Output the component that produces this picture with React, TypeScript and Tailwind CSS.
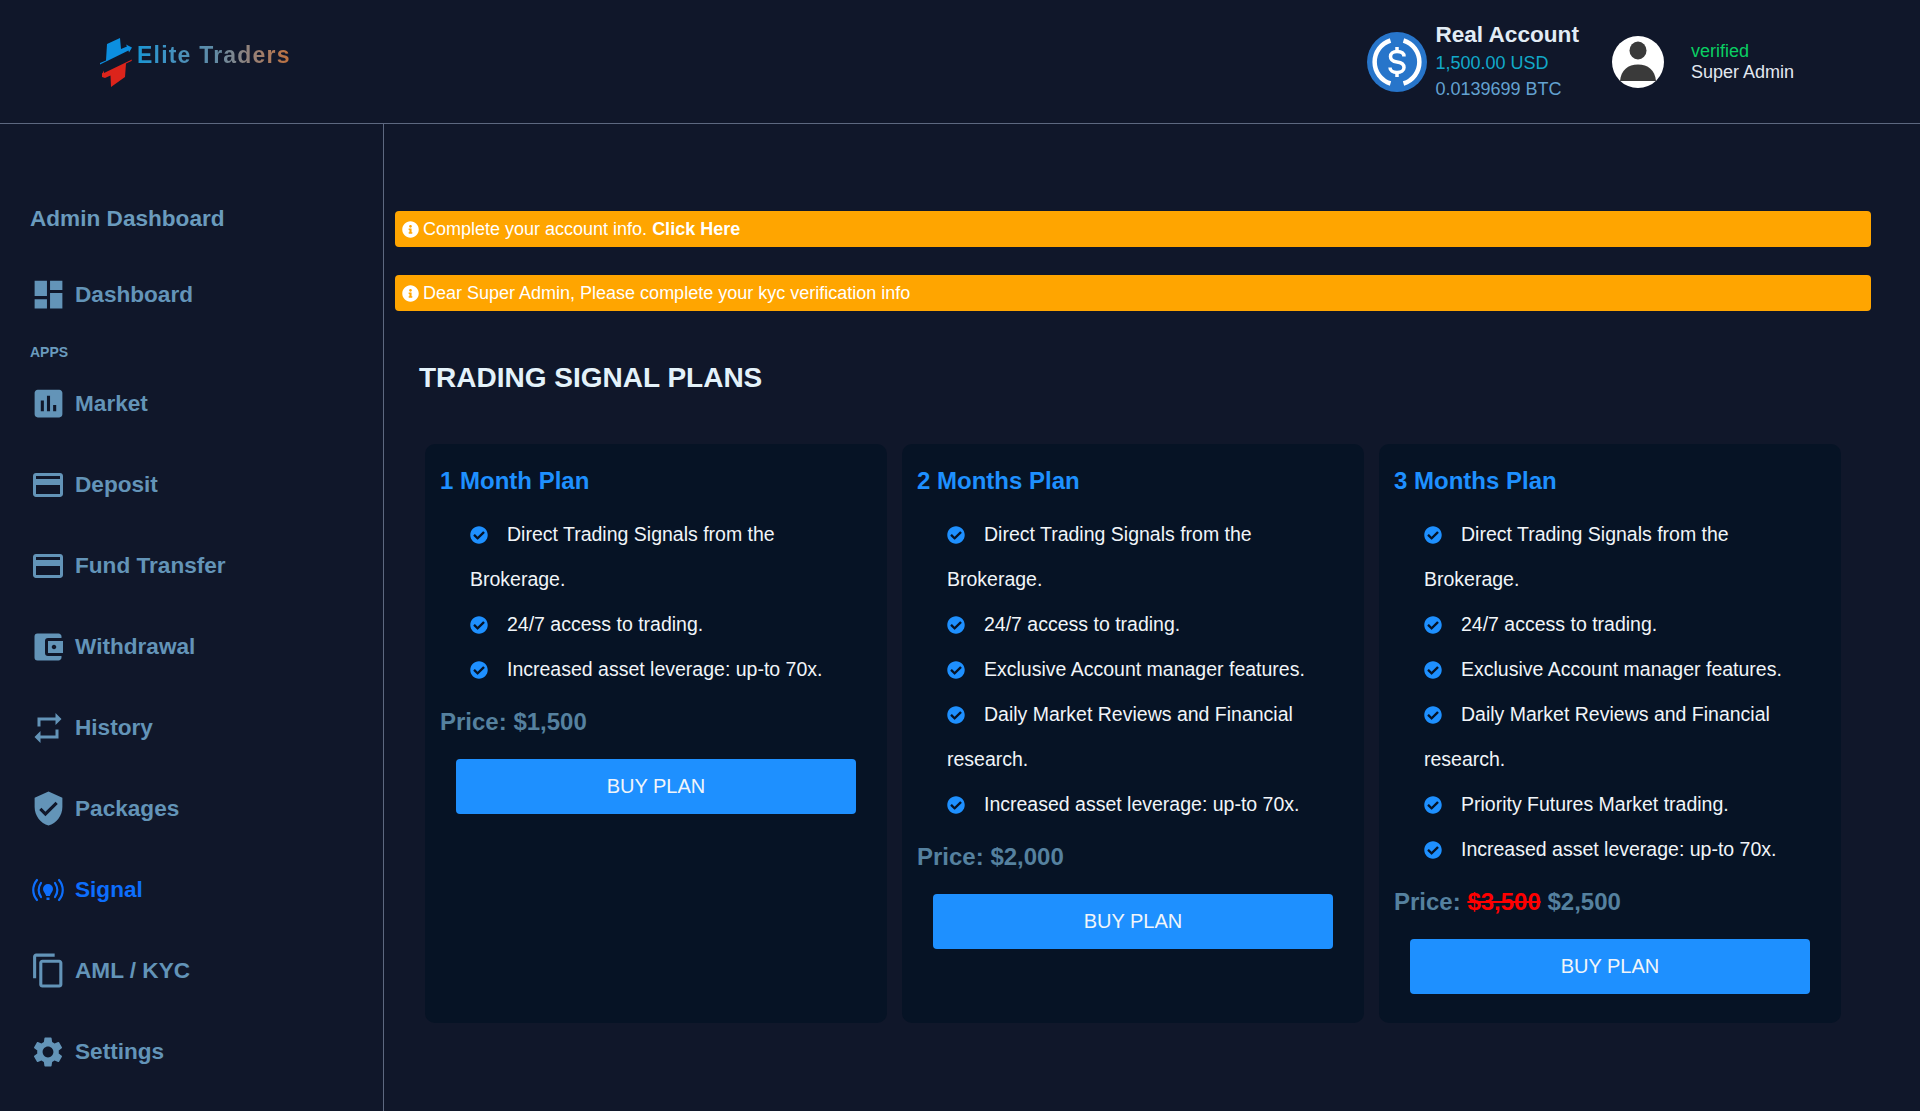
import type { ReactNode } from 'react'
import {
  MdDashboard,
  MdAssessment,
  MdCreditCard,
  MdAccountBalanceWallet,
  MdRepeat,
  MdVerifiedUser,
  MdContentCopy,
  MdSettings,
} from 'react-icons/md'
import { FaCheckCircle, FaInfoCircle } from 'react-icons/fa'

const font = 'font-["Liberation_Sans",Arial,sans-serif]'

function SignalIcon({ className }: { className?: string }) {
  return (
    <svg viewBox="0 0 32 24" className={className} fill="none" stroke="currentColor" strokeWidth="2.2" strokeLinecap="round">
      <path d="M5 2C0 8 0 16 5 22" />
      <path d="M9 5C6 9.500 6 14.500 9 19" />
      <path d="M27 2C32 8 32 16 27 22" />
      <path d="M23 5C26 9.500 26 14.500 23 19" />
      <path d="M16 6a5 5 0 0 1 5 5c0 2.500-2.200 4-3.200 7h-3.600c-1-3-3.200-4.500-3.200-7a5 5 0 0 1 5-5z" fill="currentColor" stroke="none" />
      <rect x="14.500" y="19.500" width="3" height="2.500" fill="currentColor" stroke="none" />
    </svg>
  )
}

const apps: { label: string; icon: ReactNode; active?: boolean }[] = [
  { label: 'Market', icon: <MdAssessment className="w-[37px] h-[37px] shrink-0" /> },
  { label: 'Deposit', icon: <MdCreditCard className="w-[36px] h-[36px] shrink-0" /> },
  { label: 'Fund Transfer', icon: <MdCreditCard className="w-[36px] h-[36px] shrink-0" /> },
  { label: 'Withdrawal', icon: <MdAccountBalanceWallet className="w-[36px] h-[36px] shrink-0" /> },
  { label: 'History', icon: <MdRepeat className="w-[36px] h-[36px] shrink-0" /> },
  { label: 'Packages', icon: <MdVerifiedUser className="w-[37px] h-[37px] shrink-0" /> },
  { label: 'Signal', icon: <SignalIcon className="w-[32px] h-[24px] shrink-0" />, active: true },
  { label: 'AML / KYC', icon: <MdContentCopy className="w-[37px] h-[37px] shrink-0" /> },
  { label: 'Settings', icon: <MdSettings className="w-[36px] h-[36px] shrink-0" /> },
]

function NavItem({ label, icon, active }: { label: string; icon: ReactNode; active?: boolean }) {
  return (
    <div className={`flex items-center h-[81px] pl-[30px] ${active ? 'text-[#0d6efd]' : 'text-[#6394b8]'}`}>
      <span className="w-[36px] flex items-center justify-center shrink-0">{icon}</span>
      <span className="ml-[9px] text-[22.6px] font-bold">{label}</span>
    </div>
  )
}

function Logo() {
  return (
    <div className="flex items-center">
      <svg viewBox="0 0 32 50" className="w-[32px] h-[50px]">
        <path d="M7 7L20 1L21 12L27 9.500L26 7.500L32 10.500L29 15.500L28.500 13.500L0 27.500L0 26L6 23.500Z" fill="#0c8fe0" />
        <path d="M32 22.500L31.500 24L26 26.500L25 40L11 50L10.500 38.500L5 41L2 40L2 36.500L3 35.500L4 33.500L4 36L32 22.500Z" fill="#dc241b" />
      </svg>
      <span className="ml-[5px] -mt-[12px] text-[23px] font-bold tracking-[1.2px] text-transparent bg-clip-text bg-gradient-to-r from-[#1396d4] via-[#5f8ba6] to-[#c0703a]">
        Elite Traders
      </span>
    </div>
  )
}

function CoinIcon() {
  return (
    <svg viewBox="0 0 60 60" className="w-[60px] h-[60px] shrink-0">
      <circle cx="30" cy="30" r="30" fill="#2775ca" />
      <path d="M23.500 8.500A22.500 22.500 0 0 0 23.500 51.500" fill="none" stroke="#fff" strokeWidth="4.500" />
      <path d="M36.500 8.500A22.500 22.500 0 0 1 36.500 51.500" fill="none" stroke="#fff" strokeWidth="4.500" />
      <path d="M37 24.500C37 20.500 33.500 19.500 30 19.500C26 19.500 23.500 21.500 23.500 24.500C23.500 28 26 29.500 30 30C34 30.500 37 32 37 35.500C37 38.500 34 40.500 30 40.500C26 40.500 23 38.500 23 35.500" fill="none" stroke="#fff" strokeWidth="3.500" />
      <path d="M30 15V19.500M30 40.500V45" stroke="#fff" strokeWidth="3.500" />
    </svg>
  )
}

function Avatar() {
  return (
    <div className="w-[52px] h-[52px] rounded-full bg-white overflow-hidden shrink-0">
      <svg viewBox="0 0 52 52" className="w-full h-full">
        <ellipse cx="26" cy="14.500" rx="8.500" ry="9" fill="#3a3a3a" />
        <path d="M8 45C9 34 16 28.500 26 28.500C36 28.500 43 34 44 45Z" fill="#3a3a3a" />
      </svg>
    </div>
  )
}

function Plan({ title, features, price, oldPrice }: {
  title: string
  features: string[]
  price: string
  oldPrice?: string
}) {
  return (
    <div className="bg-[#061325] rounded-[10px] px-[15px] pt-[23px] h-[579px]">
      <h3 className="text-[24px] font-bold text-[#1e90ff] leading-[28px]">{title}</h3>
      <ul className="mt-[17px] pl-[30px] pr-[10px] text-[19.5px] leading-[45px] text-[#f1f5f9]">
        {features.map(f => (
          <li key={f}>
            <FaCheckCircle className="inline-block w-[18px] h-[18px] text-[#1e90ff] mr-[19px] align-[-3px]" />
            {f}
          </li>
        ))}
      </ul>
      <div className="mt-[15px] text-[24px] font-bold text-[#55819f] leading-[30px]">
        Price:{' '}
        {oldPrice && <del className="text-[#ff0000]">{oldPrice}</del>}
        {oldPrice && ' '}
        {price}
      </div>
      <button className="block mx-auto mt-[22px] w-[400px] h-[55px] pb-[2px] rounded-[4px] bg-[#1e90ff] text-[20px] text-[#f1f5f9]">
        BUY PLAN
      </button>
    </div>
  )
}

const direct = 'Direct Trading Signals from the Brokerage.'
const access = '24/7 access to trading.'
const manager = 'Exclusive Account manager features.'
const reviews = 'Daily Market Reviews and Financial research.'
const priority = 'Priority Futures Market trading.'
const leverage = 'Increased asset leverage: up-to 70x.'

export default function App() {
  return (
    <div className={`${font} min-h-[1111px] bg-[#10172a] text-white flex flex-col`}>
      {/* Header */}
      <header className="h-[124px] border-b border-[#5d6880] flex items-center shrink-0">
        <div className="pl-[100px]">
          <Logo />
        </div>
        <div className="ml-auto flex items-center mr-[126px]">
          <CoinIcon />
          <div className="ml-[8px] -mt-[2px]">
            <div className="text-[22.6px] font-bold text-[#e2ecf5] leading-[30px]">Real Account</div>
            <div className="text-[18px] text-[#12a9c9] leading-[26px]">1,500.00 USD</div>
            <div className="text-[18px] text-[#63a2d1] leading-[26px]">0.0139699 BTC</div>
          </div>
          <div className="ml-[33px]"><Avatar /></div>
          <div className="ml-[27px]">
            <div className="text-[18px] text-[#0acf63] leading-[21px]">verified</div>
            <div className="text-[18px] text-[#e2e8f0] leading-[21px]">Super Admin</div>
          </div>
        </div>
      </header>

      <div className="flex flex-1">
        {/* Sidebar */}
        <aside className="w-[384px] border-r border-[#5d6880] shrink-0 pt-[77px]">
          <div className="pl-[30px] text-[22.6px] font-bold text-[#6a9bbd] leading-[36px]">Admin Dashboard</div>
          <div className="mt-[17px]">
            <NavItem label="Dashboard" icon={<MdDashboard className="w-[37px] h-[37px] shrink-0" />} />
          </div>
          <div className="mt-[8px] pl-[30px] text-[14px] font-bold text-[#6a9bbd] leading-[18px]">APPS</div>
          <div className="mt-[2px]">
            {apps.map(a => <NavItem key={a.label} {...a} />)}
          </div>
        </aside>

        {/* Main */}
        <main className="flex-1 pl-[11px] pr-[49px] pt-[87px]">
          <div className="h-[36px] rounded-[4px] bg-[#ffa500] flex items-center px-[7px] text-[18px]">
            <FaInfoCircle className="w-[17px] h-[17px] mr-[4px]" />
            <span>Complete your account info. <b>Click Here</b></span>
          </div>
          <div className="mt-[28px] h-[36px] rounded-[4px] bg-[#ffa500] flex items-center px-[7px] text-[18px]">
            <FaInfoCircle className="w-[17px] h-[17px] mr-[4px]" />
            <span>Dear Super Admin, Please complete your kyc verification info</span>
          </div>
          <h2 className="mt-[49px] pl-[24px] text-[28px] font-bold text-[#e4f2fa] leading-[36px]">TRADING SIGNAL PLANS</h2>
          <div className="mt-[48px] ml-[30px] mr-[30px] grid grid-cols-3 gap-[15px] items-start">
            <Plan title="1 Month Plan" features={[direct, access, leverage]} price="$1,500" />
            <Plan title="2 Months Plan" features={[direct, access, manager, reviews, leverage]} price="$2,000" />
            <Plan title="3 Months Plan" features={[direct, access, manager, reviews, priority, leverage]} price="$2,500" oldPrice="$3,500" />
          </div>
        </main>
      </div>
    </div>
  )
}
